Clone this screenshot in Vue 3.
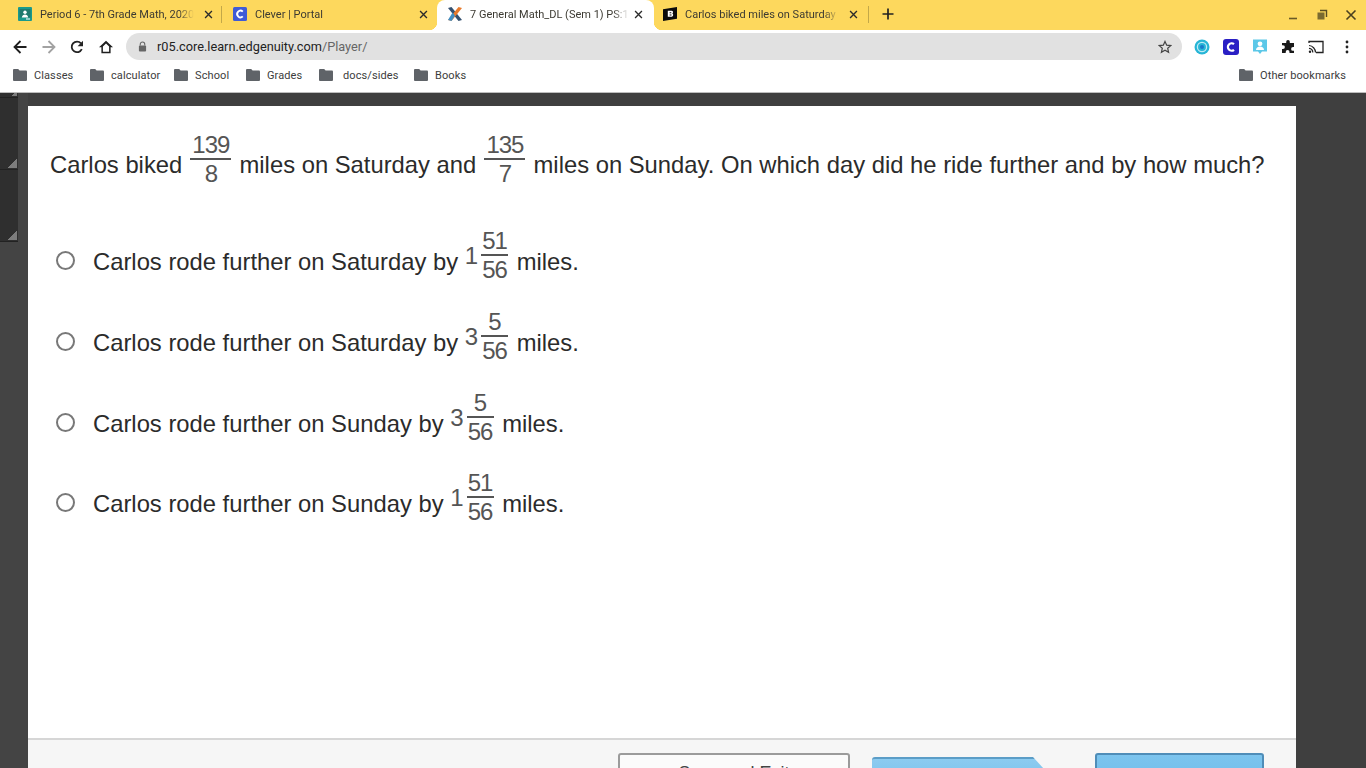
<script setup>
const tabs = [
  { title: 'Period 6 - 7th Grade Math, 2020', icon: 'classroom', width: 215 },
  { title: 'Clever | Portal', icon: 'clever', width: 215 },
  { title: '7 General Math_DL (Sem 1) PS:1', icon: 'edge', width: 217, active: true },
  { title: 'Carlos biked miles on Saturday', icon: 'brainly', width: 215, last: true },
]
const bookmarks = [
  { label: 'Classes', width: 77 },
  { label: 'calculator', width: 84 },
  { label: 'School', width: 72 },
  { label: 'Grades', width: 73 },
  { label: 'docs/sides', width: 95, wide: true },
  { label: 'Books', width: 60 },
]
const options = [
  { text: 'Carlos rode further on Saturday by', whole: '1', num: '51', den: '56', cls: 'opt-a' },
  { text: 'Carlos rode further on Saturday by', whole: '3', num: '5', den: '56', cls: 'opt-b' },
  { text: 'Carlos rode further on Sunday by', whole: '3', num: '5', den: '56', cls: 'opt-c' },
  { text: 'Carlos rode further on Sunday by', whole: '1', num: '51', den: '56', cls: 'opt-d' },
]
</script>

<template>
  <div class="screen">
    <header class="tabstrip">
      <div class="tabs">
        <div
          v-for="(tab, i) in tabs"
          :key="tab.title"
          class="tab"
          :class="{ active: tab.active, last: tab.last, divided: i === 0 || i === 3 }"
          :style="{ width: tab.width + 'px' }"
        >
          <svg v-if="tab.icon === 'classroom'" class="favicon" viewBox="0 0 14 14">
            <rect width="14" height="14" rx="1" fill="#1a9a8c" />
            <rect x="1.5" y="2" width="11" height="8.5" fill="#1f7a6e" />
            <circle cx="7" cy="5.2" r="1.7" fill="#fff" />
            <path d="M3.800 10.500c.3-2 1.600-3 3.200-3s2.900 1 3.200 3z" fill="#fff" />
            <rect x="8" y="11.500" width="4" height="1" fill="#fff" />
          </svg>
          <svg v-else-if="tab.icon === 'clever'" class="favicon" viewBox="0 0 14 14">
            <rect width="14" height="14" rx="1.500" fill="#3f5bd6" />
            <path d="M9.800 4.600A3.300 3.300 0 1 0 9.800 9.400" fill="none" stroke="#fff" stroke-width="1.900" />
          </svg>
          <svg v-else-if="tab.icon === 'edge'" class="favicon" viewBox="0 0 14 14">
            <path d="M0 1 3.500 0 14 13l-3.500 1z" fill="#34506f" />
            <path d="M14 1 10.500 0 0 13l3.500 1z" fill="#e87a2c" />
            <path d="M4.600 5.600 7 8.600 3.500 14 0 13z" fill="#3f8fc6" />
          </svg>
          <svg v-else class="favicon" viewBox="0 0 14 14">
            <path d="M0 2.200 14 0v11.800L0 14z" fill="#0b0b0b" />
            <path d="M4.800 3.800h3.800c1.500 0 2 2 .7 2.700 1.500.5 1.100 3.300-1 3.300H4.800zm1.800 1.400v1.100h1.300c.7 0 .7-1.100 0-1.100zm0 2.400v1h1.500c.8 0 .8-1 0-1z" fill="#fff" />
          </svg>
          <span class="tab-title">{{ tab.title }}</span>
          <svg class="tab-close" viewBox="0 0 10 10">
            <path d="M1.200 1.200l7.600 7.600M8.800 1.200 1.200 8.800" stroke="#2b2b2b" stroke-width="1.500" />
          </svg>
        </div>
        <svg class="new-tab" viewBox="0 0 12 12">
          <path d="M6 .5v11M.5 6h11" stroke="#222" stroke-width="1.700" />
        </svg>
      </div>
      <div class="window-controls">
        <svg viewBox="0 0 12 12"><path d="M2 9.500h8" stroke="#6a5a26" stroke-width="1.600" /></svg>
        <svg viewBox="0 0 12 12">
          <path d="M4 1.500h6.500V8" fill="none" stroke="#5a4d22" stroke-width="1.400" />
          <rect x="1.500" y="3.500" width="7" height="7" fill="#7a6a30" />
        </svg>
        <svg viewBox="0 0 12 12"><path d="M1.500 1.500l9 9M10.500 1.500l-9 9" stroke="#4a4020" stroke-width="1.600" /></svg>
      </div>
    </header>

    <div class="toolbar">
      <div class="nav">
        <svg viewBox="0 0 14 14"><path d="M13.500 7H2M7.500 1 1.500 7l6 6" fill="none" stroke="#1f1f1f" stroke-width="1.800" /></svg>
        <svg viewBox="0 0 14 14"><path d="M.5 7H12M6.500 1l6 6-6 6" fill="none" stroke="#a2a2a2" stroke-width="1.800" /></svg>
        <svg viewBox="0 0 14 14">
          <path d="M11.800 9.200A5.300 5.300 0 1 1 11 3.400" fill="none" stroke="#222" stroke-width="1.800" />
          <path d="M13 .8v5.400H7.600z" fill="#222" />
        </svg>
        <svg viewBox="0 0 14 14"><path d="M7 .8 0 7.300h2.400v6h9.200v-6H14zM3.900 6.400 7 3.400l3.100 3v5.400H3.900z" fill="#1f1f1f" /></svg>
      </div>
      <div class="omnibox">
        <svg class="lock" viewBox="0 0 10 12">
          <path d="M2.500 5V3.500a2.500 2.500 0 0 1 5 0V5" fill="none" stroke="#666" stroke-width="1.200" />
          <rect x="1" y="5" width="8" height="6.500" rx="1" fill="#666" />
        </svg>
        <span class="url">r05.core.learn.edgenuity.com<span class="url-path">/Player/</span></span>
        <svg class="star" viewBox="0 0 14 14">
          <path d="M7 1.400 8.700 5.200l4.100.4-3.100 2.700.9 4L7 10.200l-3.600 2.100.9-4L1.200 5.600l4.100-.4z" fill="none" stroke="#444" stroke-width="1.200" />
        </svg>
      </div>
      <div class="extensions">
        <svg viewBox="0 0 16 16">
          <circle cx="8" cy="8" r="7.500" fill="#26b5d6" />
          <circle cx="8" cy="8" r="4.600" fill="none" stroke="#bfeaf4" stroke-width="1.300" />
          <circle cx="8" cy="8" r="2" fill="#1979c9" />
        </svg>
        <svg viewBox="0 0 16 16">
          <rect width="16" height="16" rx="3" fill="#2a1fc4" />
          <path d="M11 5.200A3.700 3.700 0 1 0 11 10.800" fill="none" stroke="#fff" stroke-width="2.200" />
        </svg>
        <svg viewBox="0 0 16 16">
          <path d="M1 .5h14v12H10l-2 2.500-2-2.500H1z" fill="#5cc8e8" />
          <circle cx="8" cy="4.800" r="2.400" fill="#fff" />
          <path d="M4 11c0-2.400 1.800-3.600 4-3.600s4 1.200 4 3.600z" fill="#fff" />
        </svg>
        <svg class="puzzle" viewBox="0 0 14 14">
          <path d="M5.200 1.800a1.800 1.800 0 0 1 3.600 0V3H13v4h-1a1.900 1.900 0 0 0 0 3.800h1V13H8.500v-1a1.900 1.900 0 0 0-3.800 0v1H1V9h1a1.900 1.900 0 0 0 0-3.800H1V3h4.200z" fill="#1a1a1a" />
        </svg>
        <svg class="cast" viewBox="0 0 16 14">
          <path d="M1 3V1.500h14v11H8" fill="none" stroke="#222" stroke-width="1.300" />
          <path d="M1 5.500a7 7 0 0 1 6.500 7M1 8.300a4.200 4.200 0 0 1 3.800 4.200" fill="none" stroke="#222" stroke-width="1.200" />
          <circle cx="2" cy="11.800" r="1.200" fill="#222" />
        </svg>
        <svg class="dots" viewBox="0 0 4 14">
          <circle cx="2" cy="2" r="1.400" fill="#222" />
          <circle cx="2" cy="7" r="1.400" fill="#222" />
          <circle cx="2" cy="12" r="1.400" fill="#222" />
        </svg>
      </div>
    </div>

    <nav class="bookmarks">
      <div class="bm-list">
        <div v-for="b in bookmarks" :key="b.label" class="bookmark" :class="{ wide: b.wide }" :style="{ width: b.width + 'px' }">
          <svg class="folder" viewBox="0 0 14 12"><path d="M0 1.200C0 .5.500 0 1.200 0h4l1.400 1.600h6.200c.7 0 1.200.5 1.200 1.200v7.900c0 .7-.5 1.300-1.200 1.300H1.200C.5 12 0 11.400 0 10.700z" fill="#5f6368" /></svg>
          <span>{{ b.label }}</span>
        </div>
      </div>
      <div class="bookmark">
        <svg class="folder" viewBox="0 0 14 12"><path d="M0 1.200C0 .5.500 0 1.200 0h4l1.400 1.600h6.200c.7 0 1.200.5 1.200 1.200v7.900c0 .7-.5 1.300-1.200 1.300H1.200C.5 12 0 11.400 0 10.700z" fill="#5f6368" /></svg>
        <span>Other bookmarks</span>
      </div>
    </nav>

    <main class="stage">
      <aside class="rail">
        <div class="rail-block first"><i class="grip"></i></div>
        <div class="rail-block"><i class="grip"></i></div>
        <div class="rail-block"><i class="grip"></i></div>
      </aside>

      <section class="sheet">
        <div class="content">
          <p class="question">
            Carlos biked
            <span class="frac"><span class="num">139</span><span class="den">8</span></span>
            miles on Saturday and
            <span class="frac"><span class="num">135</span><span class="den">7</span></span>
            miles on Sunday. On which day did he ride further and by how much?
          </p>
          <ul class="options">
            <li v-for="o in options" :key="o.cls" class="option" :class="o.cls">
              <span class="radio"></span>
              <span class="answer">
                {{ o.text }}
                <span class="mixed">
                  <span class="whole">{{ o.whole }}</span>
                  <span class="frac small"><span class="num">{{ o.num }}</span><span class="den">{{ o.den }}</span></span>
                </span>
                miles.
              </span>
            </li>
          </ul>
        </div>
        <footer class="actions">
          <div class="btn plain">Save and Exit</div>
          <div class="btn-next"></div>
          <div class="btn blue"></div>
        </footer>
      </section>
    </main>
  </div>
</template>

<style scoped>
.screen {
  width: 1366px;
  height: 768px;
  overflow: hidden;
  display: flex;
  flex-direction: column;
  background: #3f3f3f;
  font-family: Roboto, "Liberation Sans", sans-serif;
}
.tabstrip {
  height: 30px;
  flex: none;
  background: #fdd85d;
  display: flex;
  justify-content: space-between;
}
.tabs {
  display: flex;
  padding-left: 7px;
  align-items: stretch;
}
.tab {
  display: flex;
  align-items: center;
  padding: 0 7px 2px 11px;
  box-sizing: border-box;
  position: relative;
  font-size: 11px;
  color: #3c3a32;
}
.tab.last {
  padding-left: 9px;
  padding-right: 9px;
}
.tab.divided::after {
  content: "";
  position: absolute;
  right: 0;
  top: 6px;
  height: 17px;
  width: 1px;
  background: #c3a848;
}
.tab.active {
  background: #fff;
  border-radius: 8px 8px 0 0;
  padding-right: 9px;
}
.tab.active .tab-close {
  margin-left: 5px;
}
.tab.active::before,
.tab.active::after {
  content: "";
  position: absolute;
  bottom: 0;
  width: 8px;
  height: 8px;
  top: auto;
  background: radial-gradient(circle at 0 0, #fdd85d 8px, #fff 8.5px);
}
.tab.active::before {
  left: -8px;
}
.tab.active::after {
  right: -8px;
  background: radial-gradient(circle at 100% 0, #fdd85d 8px, #fff 8.5px);
}
.favicon {
  width: 14px;
  height: 14px;
  flex: none;
  margin-right: 8px;
}
.tab-title {
  flex: 1;
  min-width: 0;
  white-space: nowrap;
  overflow: hidden;
  -webkit-mask-image: linear-gradient(90deg, #000 90%, transparent 100%);
  mask-image: linear-gradient(90deg, #000 90%, transparent 100%);
}
.tab-close {
  width: 9px;
  height: 9px;
  flex: none;
  margin: 0 2px 0 10px;
}
.new-tab {
  width: 12px;
  height: 12px;
  margin: 8px 0 0 13px;
}
.window-controls {
  display: flex;
  gap: 17px;
  padding: 9px 9px 0 0;
}
.window-controls svg {
  width: 12px;
  height: 12px;
}
.toolbar {
  height: 33px;
  flex: none;
  background: #fff;
  display: flex;
  align-items: center;
}
.nav {
  width: 126px;
  flex: none;
  display: flex;
  gap: 14.7px;
  padding-left: 13px;
  box-sizing: border-box;
}
.nav svg {
  width: 14px;
  height: 14px;
}
.omnibox {
  width: 1056px;
  height: 27px;
  flex: none;
  border-radius: 14px;
  background: #e1e1e1;
  display: flex;
  align-items: center;
  padding: 0 10px 0 12px;
  box-sizing: border-box;
}
.lock {
  width: 9px;
  height: 11px;
  margin-right: 10px;
}
.url {
  flex: 1;
  font-size: 12.75px;
  color: #222;
}
.url-path {
  color: #666;
}
.star {
  width: 14px;
  height: 14px;
}
.extensions {
  flex: 1;
  display: flex;
  align-items: center;
  gap: 13px;
  padding-left: 12px;
}
.extensions svg {
  width: 16px;
  height: 16px;
  flex: none;
}
.extensions .puzzle {
  width: 14px;
  height: 14px;
}
.extensions .dots {
  width: 4px;
  height: 14px;
  margin-left: 8px;
}
.bookmarks {
  height: 30px;
  flex: none;
  box-sizing: border-box;
  background: #fff;
  border-bottom: 1px solid #bdbdbd;
  display: flex;
  justify-content: space-between;
  align-items: center;
  padding: 0 20px 5px 13px;
  font-size: 11px;
  color: #3c3c3c;
}
.bm-list {
  display: flex;
}
.bookmark {
  display: flex;
  align-items: center;
  gap: 7px;
  letter-spacing: 0.1px;
}
.bookmark.wide {
  gap: 10px;
}
.folder {
  width: 14px;
  height: 12px;
  flex: none;
}
.stage {
  flex: 1;
  min-height: 0;
  display: flex;
  background: #3f3f3f;
  padding-top: 13px;
}
.rail {
  width: 28px;
  flex: none;
  margin-top: -13px;
  background: #444;
}
.rail-block {
  width: 18px;
  height: 72px;
  position: relative;
  box-sizing: border-box;
  background: #2f2f2f;
  border-bottom: 1px solid #222;
}
.rail-block.first {
  height: 5px;
}
.grip {
  position: absolute;
  right: 1px;
  bottom: 1px;
  width: 9px;
  height: 9px;
  background: linear-gradient(135deg, transparent 50%, #7d7d7d 50%);
}
.rail-block.first .grip {
  height: 3px;
  bottom: 1px;
}
.sheet {
  width: 1268px;
  flex: none;
  height: 700px;
  background: #fff;
  color: #2b2b2b;
  font-family: "Liberation Sans", Arial, sans-serif;
  display: flex;
  flex-direction: column;
}
.content {
  height: 632px;
  flex: none;
  box-sizing: border-box;
  padding: 27px 0 0 22px;
}
.question {
  margin: 0;
  font-size: 23.8px;
  line-height: 54px;
  white-space: nowrap;
}
.frac {
  display: inline-flex;
  flex-direction: column;
  align-items: center;
  vertical-align: 20px;
  margin: 0 1.5px;
  min-width: 41px;
  font-size: 24px;
  letter-spacing: -1px;
  color: #555;
}
.frac .num {
  align-self: stretch;
  text-align: center;
  border-bottom: 2px solid #555;
  line-height: 23px;
  height: 25px;
}
.frac .den {
  padding-top: 2px;
  line-height: 24px;
  height: 24px;
}
.frac.small {
  min-width: 27px;
  vertical-align: baseline;
  margin: 0;
}
.options {
  list-style: none;
  margin: 0;
  padding: 0;
}
.option {
  display: flex;
  align-items: center;
  height: 81px;
  padding-left: 6px;
  font-size: 23.8px;
  white-space: nowrap;
}
.opt-a {
  margin-top: 23px;
}
.opt-d {
  height: 79px;
}
.radio {
  width: 15px;
  height: 15px;
  flex: none;
  border: 2px solid #787878;
  border-radius: 50%;
  background: #fff;
  margin: 10px 18px 0 0;
}
.answer {
  display: block;
}
.mixed {
  display: inline-flex;
  align-items: center;
  gap: 3px;
  vertical-align: 6px;
  margin: 0 2px 0 0;
}
.whole {
  font-size: 24px;
  line-height: 24px;
  color: #555;
}
.actions {
  flex: 1;
  background: #f6f6f6;
  border-top: 2px solid #d6d6d6;
  display: flex;
  align-items: flex-start;
  padding: 13px 0 0 590px;
  box-sizing: border-box;
}
.btn {
  height: 40px;
  box-sizing: border-box;
  border-radius: 3px;
}
.btn.plain {
  width: 232px;
  background: #fbfbfb;
  border: 2px solid #9b9b9b;
  text-align: center;
  font-size: 18px;
  line-height: 24px;
  padding-top: 6px;
  color: #444;
}
.btn-next {
  width: 184px;
  height: 40px;
  margin: 4px 0 0 22px;
  background: linear-gradient(#8ccbf0, #6fbdea);
  clip-path: polygon(0 0, 161px 0, 184px 25px, 184px 100%, 0 100%);
  border-top: 2px solid #5b9dc7;
  box-sizing: border-box;
  border-radius: 3px 0 0 0;
}
.btn.blue {
  width: 169px;
  margin-left: 39px;
  background: linear-gradient(#7cc4ee, #6dbcea);
  border: 2px solid #4f8db8;
}
</style>
